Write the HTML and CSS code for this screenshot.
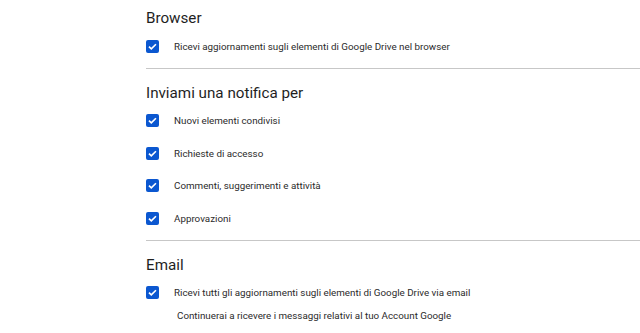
FILE: index.html
```html
<!DOCTYPE html>
<html lang="it">
<head>
    <meta charset="UTF-8">
    <meta name="viewport" content="width=device-width, initial-scale=1.0">
    <title>Notifiche</title>
    <link rel="stylesheet" href="styles.css">
</head>
<body>

    <div class="settings">
        <section class="group">
            <h2 class="group-title">Browser</h2>
            <label class="option">
                <span class="check"><svg viewBox="0 0 14 14"><path d="M3.2 7.2l2.5 2.4 5-5" /></svg></span>
                <span class="option-text">Ricevi aggiornamenti sugli elementi di Google Drive nel browser</span>
            </label>
        </section>

        <section class="group">
            <h2 class="group-title">Inviami una notifica per</h2>
            <label class="option">
                <span class="check"><svg viewBox="0 0 14 14"><path d="M3.2 7.2l2.5 2.4 5-5" /></svg></span>
                <span class="option-text">Nuovi elementi condivisi</span>
            </label>
            <label class="option">
                <span class="check"><svg viewBox="0 0 14 14"><path d="M3.2 7.2l2.5 2.4 5-5" /></svg></span>
                <span class="option-text">Richieste di accesso</span>
            </label>
            <label class="option">
                <span class="check"><svg viewBox="0 0 14 14"><path d="M3.2 7.2l2.5 2.4 5-5" /></svg></span>
                <span class="option-text">Commenti, suggerimenti e attività</span>
            </label>
            <label class="option">
                <span class="check"><svg viewBox="0 0 14 14"><path d="M3.2 7.2l2.5 2.4 5-5" /></svg></span>
                <span class="option-text">Approvazioni</span>
            </label>
        </section>

        <section class="group last">
            <h2 class="group-title">Email</h2>
            <label class="option">
                <span class="check"><svg viewBox="0 0 14 14"><path d="M3.2 7.2l2.5 2.4 5-5" /></svg></span>
                <span class="option-text">Ricevi tutti gli aggiornamenti sugli elementi di Google Drive via email</span>
            </label>
            <p class="hint">Continuerai a ricevere i messaggi relativi al tuo Account Google</p>
        </section>
    </div>

</body>
</html>
```

FILE: styles.css
```css
body {
    font-family: Roboto, 'Noto Sans', Arial, sans-serif;
    background-color: #fff;
    color: #1f1f1f;
    margin: 0;
    padding: 0;
    overflow: hidden;
}

.settings {
    margin-left: 146px;
}

.group {
    border-bottom: 1px solid #c7c7c7;
    padding-bottom: 5px;
}

.group.last {
    border-bottom: none;
}

.group-title {
    font-size: 15.2px;
    font-weight: 400;
    line-height: 24px;
    margin: 0;
    padding-top: 6px;
    color: #1f1f1f;
}

.group + .group .group-title {
    padding-top: 12px;
}

.option {
    display: flex;
    align-items: center;
    height: 32.5px;
    cursor: pointer;
}

.check {
    width: 13px;
    height: 13px;
    background-color: #0b57d0;
    border-radius: 2px;
    display: flex;
    align-items: center;
    justify-content: center;
    flex-shrink: 0;
}

.check svg {
    width: 13px;
    height: 13px;
    fill: none;
    stroke: #fff;
    stroke-width: 1.8;
}

.option-text {
    margin-left: 15px;
    font-size: 9.8px;
    color: #2b2b2b;
}

.hint {
    margin: 1px 0 0 31px;
    font-size: 9.8px;
    color: #2b2b2b;
}
```
